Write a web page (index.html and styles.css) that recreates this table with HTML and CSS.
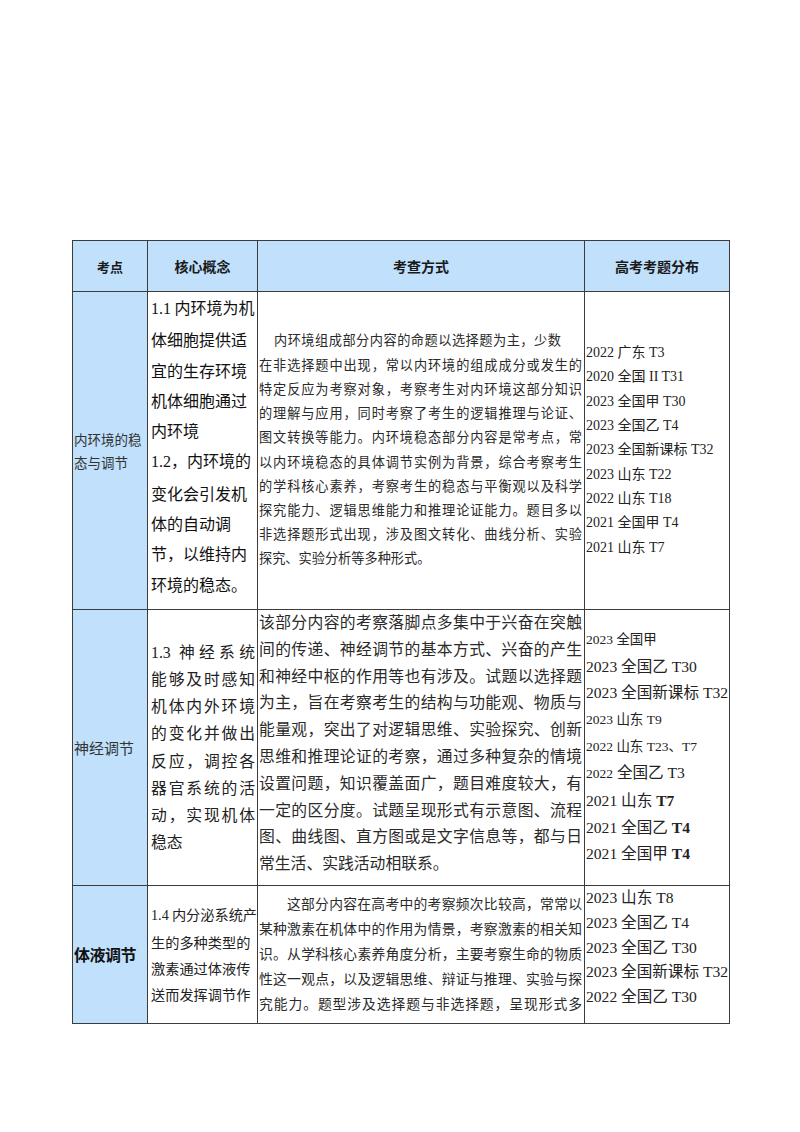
FILE: index.html
```html
<!DOCTYPE html>
<html lang="zh-CN">
<head>
<meta charset="utf-8">
<title>考点表</title>
<link rel="stylesheet" href="styles.css">
</head>
<body>
<div class="page">
<table class="grid">
<colgroup>
<col class="c1"><col class="c2"><col class="c3"><col class="c4">
</colgroup>
<thead>
<tr class="hd">
<th>考点</th>
<th>核心概念</th>
<th>考查方式</th>
<th>高考考题分布</th>
</tr>
</thead>
<tbody>
<tr class="r1">
<td class="topic">内环境的稳<br>态与调节</td>
<td class="concept c-r1"><span class="num">1.1</span> 内环境为机<br>体细胞提供适<br>宜的生存环境<br>机体细胞通过<br>内环境<br><span class="num">1.2</span>，内环境的<br>变化会引发机<br>体的自动调<br>节，以维持内<br>环境的稳态。</td>
<td class="desc d-r1">
<div class="l first">内环境组成部分内容的命题以选择题为主，少数</div>
<div class="l">在非选择题中出现，常以内环境的组成成分或发生的</div>
<div class="l">特定反应为考察对象，考察考生对内环境这部分知识</div>
<div class="l">的理解与应用，同时考察了考生的逻辑推理与论证、</div>
<div class="l">图文转换等能力。内环境稳态部分内容是常考点，常</div>
<div class="l">以内环境稳态的具体调节实例为背景，综合考察考生</div>
<div class="l">的学科核心素养，考察考生的稳态与平衡观以及科学</div>
<div class="l">探究能力、逻辑思维能力和推理论证能力。题目多以</div>
<div class="l">非选择题形式出现，涉及图文转化、曲线分析、实验</div>
<div class="l end">探究、实验分析等多种形式。</div>
</td>
<td class="exams e-r1">
<div>2022 广东 T3</div>
<div>2020 全国 II T31</div>
<div>2023 全国甲 T30</div>
<div>2023 全国乙 T4</div>
<div>2023 全国新课标 T32</div>
<div>2023 山东 T22</div>
<div>2022 山东 T18</div>
<div>2021 全国甲 T4</div>
<div>2021 山东 T7</div>
</td>
</tr>
<tr class="r2">
<td class="topic t-r2">神经调节</td>
<td class="concept c-r2">
<div class="l">1.3 神经系统</div>
<div class="l">能够及时感知</div>
<div class="l">机体内外环境</div>
<div class="l">的变化并做出</div>
<div class="l">反应，调控各</div>
<div class="l">器官系统的活</div>
<div class="l">动，实现机体</div>
<div class="l end">稳态</div>
</td>
<td class="desc d-r2">
<div class="l">该部分内容的考察落脚点多集中于兴奋在突触</div>
<div class="l">间的传递、神经调节的基本方式、兴奋的产生</div>
<div class="l">和神经中枢的作用等也有涉及。试题以选择题</div>
<div class="l">为主，旨在考察考生的结构与功能观、物质与</div>
<div class="l">能量观，突出了对逻辑思维、实验探究、创新</div>
<div class="l">思维和推理论证的考察，通过多种复杂的情境</div>
<div class="l">设置问题，知识覆盖面广，题目难度较大，有</div>
<div class="l">一定的区分度。试题呈现形式有示意图、流程</div>
<div class="l">图、曲线图、直方图或是文字信息等，都与日</div>
<div class="l end">常生活、实践活动相联系。</div>
</td>
<td class="exams e-r2">
<div class="sm">2023 全国甲</div>
<div>2023 全国乙 T30</div>
<div>2023 全国新课标 T32</div>
<div class="sm">2023 山东 T9</div>
<div class="sm">2022 山东 T23、T7</div>
<div><span class="sm">2022</span> 全国乙 T3</div>
<div>2021 山东 <b>T7</b></div>
<div>2021 全国乙 <b>T4</b></div>
<div>2021 全国甲 <b>T4</b></div>
</td>
</tr>
<tr class="r3">
<td class="topic t-r3">体液调节</td>
<td class="concept c-r3"><span class="num">1.4</span> 内分泌系统产<br>生的多种类型的<br>激素通过体液传<br>送而发挥调节作</td>
<td class="desc d-r3">
<div class="l ind">这部分内容在高考中的考察频次比较高，常常以</div>
<div class="l">某种激素在机体中的作用为情景，考察激素的相关知</div>
<div class="l">识。从学科核心素养角度分析，主要考察生命的物质</div>
<div class="l">性这一观点，以及逻辑思维、辩证与推理、实验与探</div>
<div class="l">究能力。题型涉及选择题与非选择题，呈现形式多</div>
</td>
<td class="exams e-r3">
<div>2023 山东 T8</div>
<div>2023 全国乙 T4</div>
<div>2023 全国乙 T30</div>
<div>2023 全国新课标 T32</div>
<div>2022 全国乙 T30</div>
</td>
</tr>
</tbody>
</table>
</div>
</body>
</html>
```
FILE: styles.css
```css
html, body {
  margin: 0;
  padding: 0;
  background: #ffffff;
}

body {
  font-family: "Noto Sans CJK SC", "Noto Sans", sans-serif;
  color: #1a1a1a;
}

.page {
  width: 800px;
  height: 1132px;
  padding: 240px 0 0 72px;
  box-sizing: border-box;
}

.grid {
  border-collapse: collapse;
  table-layout: fixed;
  width: 657px;
}

.c1 { width: 75px; }
.c2 { width: 110px; }
.c3 { width: 327px; }
.c4 { width: 145px; }

.grid th,
.grid td {
  border: 1px solid #3c3c3c;
  padding: 0;
  overflow: hidden;
}

.hd th {
  height: 50px;
  background: #c0e0fb;
  font-size: 14px;
  font-weight: 700;
  text-align: center;
  vertical-align: middle;
  color: #1a1a1a;
}

.hd th:first-child {
  font-size: 13px;
}

.r1 td { height: 317px; }
.r2 td { height: 275px; }
.r3 td { height: 137px; }

.topic {
  background: #c0e0fb;
  font-size: 13.5px;
  line-height: 23px;
  padding-left: 1px !important;
  vertical-align: middle;
  color: #333;
}

.t-r2 {
  font-size: 15px;
}

.t-r3 {
  font-size: 16px;
  font-weight: 700;
  color: #111;
  letter-spacing: -0.5px;
}

.concept {
  padding: 0 2px 0 3px !important;
  vertical-align: top;
  white-space: nowrap;
}

.num {
  font-family: "Liberation Serif", serif;
}

.c-r1 {
  font-size: 16px;
  line-height: 30.3px;
  color: #111;
}

.c-r2 {
  font-family: "Liberation Serif", "Noto Sans CJK SC", serif;
  font-size: 15.8px;
  line-height: 27.2px;
  vertical-align: middle;
  color: #222;
  white-space: normal;
}

.c-r3 {
  font-size: 14.2px;
  line-height: 26.4px;
  vertical-align: middle;
  color: #222;
}

.l {
  text-align: justify;
  text-align-last: justify;
}

.l.end {
  text-align-last: left;
}

.desc {
  font-family: "Liberation Serif", "Noto Sans CJK SC", serif;
  padding: 0 2px 0 1px !important;
  vertical-align: middle;
  color: #2a2a2a;
}

.d-r1 {
  font-size: 13.2px;
  line-height: 24.2px;
}

.d-r1 .first {
  padding-left: 15px;
  letter-spacing: 0.5px;
  text-align-last: left;
}

.d-r2 {
  font-size: 15.8px;
  line-height: 26.8px;
  vertical-align: top;
}

.d-r3 {
  font-size: 13.8px;
  line-height: 25px;
}

.d-r3 .ind {
  padding-left: 28px;
}

.exams {
  font-family: "Liberation Serif", "Noto Sans CJK SC", serif;
  padding: 0 0 0 1px !important;
  vertical-align: middle;
  white-space: nowrap;
  color: #222;
}

.e-r1 {
  font-size: 14px;
  line-height: 24.3px;
}

.e-r2 {
  font-size: 15.6px;
  line-height: 26.7px;
}

.e-r2 .sm {
  font-size: 13.5px;
}

.e-r2 b {
  font-weight: 700;
}

.e-r3 {
  font-size: 15.6px;
  line-height: 24.8px;
  padding-top: 0 !important;
  vertical-align: top;
}
```
